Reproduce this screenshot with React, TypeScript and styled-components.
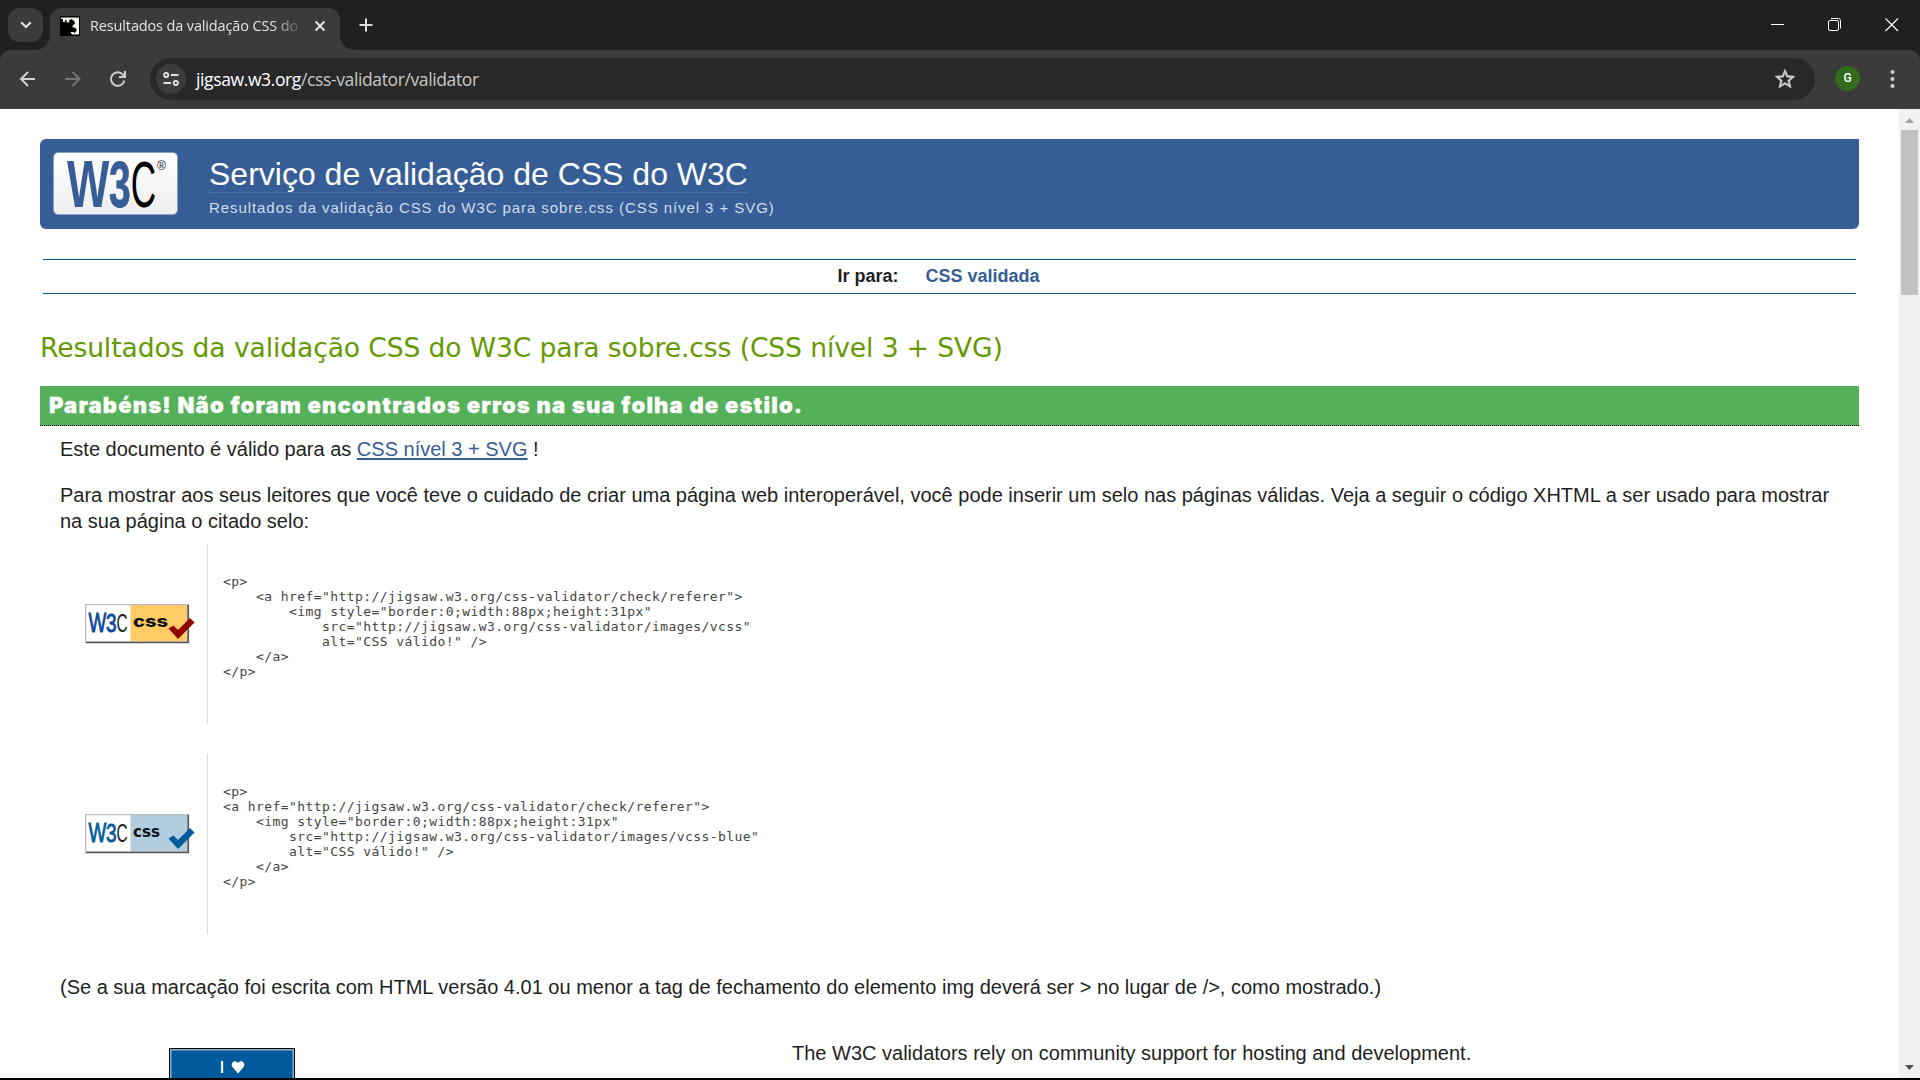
import React from "react";
import styled, { createGlobalStyle } from "styled-components";

const Global = createGlobalStyle`
  * { box-sizing: border-box; }
  body { margin: 0; background: #fff; overflow: hidden; }
`;

const arial = `"Liberation Sans", Arial, sans-serif`;
const segoe = `"Open Sans", "Noto Sans", sans-serif`;

const Window = styled.div`
  width: 1920px; height: 1080px; display: flex; flex-direction: column;
  border-bottom: 2px solid #000; background: #3b3b3b; overflow: hidden;
`;
const TabStrip = styled.div`
  height: 50px; flex: none; background: #1f2121; display: flex; padding-left: 8px; align-items: flex-start;
`;
const TabSearch = styled.div`
  width: 35px; height: 34px; margin-top: 8px; border-radius: 12px; background: #3b3b3b;
  display: flex; align-items: center; justify-content: center;
`;
const Tab = styled.div`
  width: 290px; height: 42px; margin: 8px 0 0 7px; border-radius: 12px 12px 0 0; background: #3b3b3b;
  display: flex; align-items: center; padding: 0 12px 7px 10px; position: relative;
  &::before, &::after {
    content: ""; position: absolute; bottom: 0; width: 14px; height: 14px;
  }
  &::before { left: -14px; background: radial-gradient(circle at 0 0, transparent 13.5px, #3b3b3b 14px); }
  &::after { right: -14px; background: radial-gradient(circle at 100% 0, transparent 13.5px, #3b3b3b 14px); }
`;
const TabTitle = styled.div`
  width: 212px; margin-left: 10px; overflow: hidden; white-space: nowrap;
  font: 14.5px/20px ${segoe}; letter-spacing: -0.14px; color: #e3e3e3;
  mask-image: linear-gradient(to right, #000 182px, transparent 214px);
`;
const TabClose = styled.svg`margin-left: 12px; flex: none;`;
const NewTab = styled.svg`margin: 18px 0 0 19px;`;
const WindowControls = styled.div`
  margin: 18px 21px 0 auto; display: flex; gap: 43px;
`;

const ToolbarBack = styled.div`background: #1f2121; flex: none;`;
const Toolbar = styled.div`
  height: 59px; background: #3b3b3b; border-bottom: 1px solid #4a4646; border-radius: 10px 10px 0 0;
  display: flex; align-items: center; padding: 0 20px 1px 18px;
`;
const NavIcon = styled.svg`margin-right: 25px; flex: none;`;
const AddressBar = styled.div`
  width: 1665px; height: 42px; margin-left: -3px; border-radius: 21px; background: #282828;
  display: flex; align-items: center; padding: 0 18px 0 6px;
`;
const SiteChip = styled.div`
  width: 30px; height: 30px; border-radius: 50%; background: #3c3c3c;
  display: flex; align-items: center; justify-content: center;
`;
const Url = styled.div`
  margin-left: 10px; font: 17.5px/24px ${segoe}; letter-spacing: -0.38px; color: #c7c7c7; flex: 1;
  b { font-weight: 400; color: #fff; }
`;
const Avatar = styled.div`
  width: 25px; height: 25px; margin-left: 20px; border-radius: 50%; background: #316b1c; color: #fff;
  font: 500 12px/25px Roboto, sans-serif; text-align: center;
`;
const Menu = styled.svg`margin-left: auto;`;

const Viewport = styled.div`flex: 1; min-height: 0; display: flex; background: #fff;`;
const Page = styled.main`
  width: 1899px; padding: 30px 40px 0; overflow: hidden; font-family: ${arial}; color: #1f1f1f;
`;
const ScrollTrack = styled.div`
  width: 21px; background: #f1f1f1; display: flex; flex-direction: column; align-items: center; justify-content: space-between;
`;
const ScrollThumb = styled.div`width: 17px; height: 165px; background: #c1c1c1; margin-bottom: auto;`;
const ScrollArrow = styled.svg`flex: none; display: block;`;

const Banner = styled.header`
  height: 90px; background: #365d95; border-radius: 6px 0 6px 6px; display: flex; padding: 13px 0 0 13px;
`;
const LogoPlate = styled.div`
  width: 125px; height: 63px; border-radius: 5px; border: 1px solid #85a0c4;
  background: linear-gradient(#fff, #eee); display: flex;
  svg { overflow: visible; }
`;
const BannerText = styled.div`
  margin: 1px 0 0 31px; display: flex; flex-direction: column; align-items: flex-start;
`;
const Title = styled.h1`
  margin: 0; padding-top: 4px; font: 400 32px/35px ${arial}; color: #fff; border-bottom: 1px solid #51719f; white-space: nowrap;
`;
const Tagline = styled.p`
  margin: 5px 0 0; font: 15px/20px ${arial}; letter-spacing: 0.93px; color: #cfdcec; white-space: nowrap;
`;
const JumpBar = styled.nav`
  margin: 30px 3px 0; height: 35px; border: solid #005a9c; border-width: 1px 0;
  display: flex; justify-content: center; gap: 27px; padding-right: 22px;
  font: bold 18px/33px ${arial};
  a { color: #365d95; }
`;
const Results = styled.h2`
  margin: 37px 0 0; height: 55px; font: 400 26.6px/34px "DejaVu Sans", Verdana, sans-serif;
  letter-spacing: -0.12px; color: #690; white-space: nowrap;
`;
const Success = styled.h3`
  margin: 0; height: 40px; padding: 0 9px; background: #55b05a; border-bottom: 1px dotted #000; color: #fff;
  font: 900 22px/38px Inter, "Liberation Sans", sans-serif; letter-spacing: 1.18px; white-space: nowrap;
  -webkit-text-stroke: 0.3px #fff;
`;
const Paragraph = styled.p<{ $top: number }>`
  margin: ${(p) => p.$top}px 20px 0; font: 20px/26px ${arial};
  a { color: #365d95; text-decoration: underline; text-decoration-thickness: 2px; text-underline-offset: 2px; }
`;
const BadgeRow = styled.div<{ $top: number }>`
  margin-top: ${(p) => p.$top}px; height: 180px; display: flex; align-items: center;
`;
const BadgeCell = styled.div`
  width: 168px; height: 180px; padding: 60px 0 0 45px; border-right: 1px solid #ddd;
`;
const Code = styled.pre`
  margin: 0; padding: 0 0 15px 15px; font: 13px/15px "DejaVu Sans Mono", monospace; letter-spacing: 0.424px; color: #444;
`;
const Support = styled.div`margin-top: 40px; display: flex; align-items: flex-start;`;
const Donate = styled.div`
  width: 126px; height: 60px; margin: 8px 0 0 129px; border: 1px solid #000; background: #005a9c;
  box-shadow: inset 0 0 0 1.5px #8fb0cc; display: flex; justify-content: center; gap: 7px; padding: 8px 0 0 1px;
  color: #fff; font: 600 16px/20px "Open Sans", sans-serif;
`;
const SupportText = styled.p`margin: 0 0 0 497px; font: 20px/26px ${arial};`;

function MainLogo() {
  return (
    <svg width="123" height="61" viewBox="0 0 123 61">
      <g fontFamily="Liberation Sans">
        <text transform="translate(13 54) scale(.68 1)" fontSize="66" fontWeight="bold" fill="#365d95">W</text>
        <text transform="translate(55 53.500) scale(.61 1)" fontSize="64" fontWeight="bold" fill="#365d95" stroke="#365d95" strokeWidth=".8">3</text>
        <text transform="translate(76.800 53.500) scale(.55 1)" fontSize="64" fill="#000">C</text>
        <text x="103" y="17" fontSize="12" fill="#111">®</text>
      </g>
    </svg>
  );
}

const BadgeImage = styled.svg`overflow: visible; display: block;`;

function CssBadge({ fill, check, w3, wide }: { fill: string; check: string; w3: string; wide?: boolean }) {
  return (
    <BadgeImage width="110" height="39" viewBox="0 0 110 39">
      <rect x="0" y="0" width="104" height="39" fill="#bbb" />
      <path d="M1 38.5H104M103.3 1V39" stroke="#555" strokeWidth="1.6" />
      <rect x="1.2" y="1.2" width="44.5" height="36" fill="#fff" />
      <rect x="45.7" y="1.2" width="56" height="36" fill={fill} />
      <g fontFamily="Liberation Sans">
        <text transform="translate(3.5 28) scale(.7 1)" fontSize="27" fill={w3} stroke={w3} strokeWidth=".9">W</text>
        <text transform="translate(21 28) scale(.72 1)" fontSize="26.5" fill={w3} stroke={w3} strokeWidth=".9">3</text>
        <text transform="translate(31.500 28) scale(.58 1)" fontSize="26.5" fill="#222">C</text>
      </g>
      <text x="48" y="23.3" fontFamily={wide ? "Inter" : "DejaVu Sans"} fontWeight={wide ? 800 : 700} fontSize={wide ? 16 : 15.5}
        textLength={wide ? 35 : 27} lengthAdjust="spacingAndGlyphs" fill="#111">css</text>
      <path d="M83.5 24.5L88.5 21.5L93 26L105 14L109.5 18.5L93 35Z" fill={check} />
    </BadgeImage>
  );
}

const codeGold = `<p>
    <a href="http://jigsaw.w3.org/css-validator/check/referer">
        <img style="border:0;width:88px;height:31px"
            src="http://jigsaw.w3.org/css-validator/images/vcss"
            alt="CSS válido!" />
    </a>
</p>`;
const codeBlue = `<p>
<a href="http://jigsaw.w3.org/css-validator/check/referer">
    <img style="border:0;width:88px;height:31px"
        src="http://jigsaw.w3.org/css-validator/images/vcss-blue"
        alt="CSS válido!" />
    </a>
</p>`;

export default function App() {
  return (
    <Window>
      <Global />
      <TabStrip>
        <TabSearch>
          <svg width="12" height="8" viewBox="0 0 12 8"><path d="M1.2 1.2L6 6L10.8 1.2" fill="none" stroke="#e3e3e3" strokeWidth="2" /></svg>
        </TabSearch>
        <Tab>
          <svg width="20" height="20" viewBox="0 0 20 20">
            <rect width="20" height="20" fill="#000" />
            <path d="M1 1.500H19V18.500H12L10.500 16H13.500L14.500 17L16.500 15V13L14.500 11.500H12.500V10L15 7.500L14 5L11.500 3L9.500 4L9 6.500H6.500V4H5V6H3V3H1Z" fill="#f4f4ea" />
          </svg>
          <TabTitle>Resultados da validação CSS do</TabTitle>
          <TabClose width="12" height="12" viewBox="0 0 12 12"><path d="M1.5 1.5L10.5 10.5M10.5 1.5L1.5 10.5" stroke="#e3e3e3" strokeWidth="1.9" /></TabClose>
        </Tab>
        <NewTab width="14" height="14" viewBox="0 0 14 14"><path d="M7 .5V13.5M.5 7H13.5" stroke="#dedede" strokeWidth="2" /></NewTab>
        <WindowControls>
          <svg width="14" height="14"><path d="M0 6.5H13" stroke="#fff" /></svg>
          <svg width="14" height="14" fill="none" stroke="#fff"><rect x=".5" y="2.5" width="10" height="10" rx="1.5" /><path d="M3 .5H10.5Q12.5 .5 12.5 2.5V10.5" /></svg>
          <svg width="14" height="14"><path d="M.5 .5L13 13M13 .5L.5 13" stroke="#fff" strokeWidth="1.1" /></svg>
        </WindowControls>
      </TabStrip>
      <ToolbarBack>
        <Toolbar>
          <NavIcon width="20" height="20" viewBox="0 0 20 20" fill="none" stroke="#d0d0d0" strokeWidth="2"><path d="M17 10H3M10 3L3 10L10 17" /></NavIcon>
          <NavIcon width="20" height="20" viewBox="0 0 20 20" fill="none" stroke="#757575" strokeWidth="2"><path d="M2 10H16M9.5 3L16.5 10L9.5 17" /></NavIcon>
          <NavIcon width="20" height="20" viewBox="0 0 20 20" fill="none" stroke="#d0d0d0" strokeWidth="2"><path d="M16.4 11.5A6.8 6.8 0 1 1 15.3 6L17 8M17 2V8H11" /></NavIcon>
          <AddressBar>
            <SiteChip>
              <svg width="16" height="14" viewBox="0 0 16 14" fill="none" stroke="#e3e3e3" strokeWidth="1.9"><circle cx="3.2" cy="3" r="2.1" /><path d="M8 3H15.5M.5 11H8" /><circle cx="12.8" cy="11" r="2.1" /></svg>
            </SiteChip>
            <Url><b>jigsaw.w3.org</b>/css-validator/validator</Url>
            <svg width="24" height="24" viewBox="0 0 24 24" fill="#d0d0d0"><path d="M22 9.24l-7.19-.62L12 2 9.19 8.63 2 9.24l5.46 4.73L5.82 21 12 17.27 18.18 21l-1.63-7.03L22 9.24zM12 15.4l-3.76 2.27 1-4.28-3.32-2.88 4.38-.38L12 6.1l1.71 4.04 4.38.38-3.32 2.88 1 4.28L12 15.4z" stroke="#d0d0d0" strokeWidth=".5" /></svg>
          </AddressBar>
          <Avatar>G</Avatar>
          <Menu width="16" height="20" fill="#d0d0d0"><circle cx="8.500" cy="3" r="2" /><circle cx="8.500" cy="10" r="2" /><circle cx="8.500" cy="17" r="2" /></Menu>
        </Toolbar>
      </ToolbarBack>
      <Viewport>
        <Page>
          <Banner>
            <LogoPlate><MainLogo /></LogoPlate>
            <BannerText>
              <Title>Serviço de validação de CSS do W3C</Title>
              <Tagline>Resultados da validação CSS do W3C para sobre.css (CSS nível 3 + SVG)</Tagline>
            </BannerText>
          </Banner>
          <JumpBar><span>Ir para:</span><a>CSS validada</a></JumpBar>
          <Results>Resultados da validação CSS do W3C para sobre.css (CSS nível 3 + SVG)</Results>
          <Success>Parabéns! Não foram encontrados erros na sua folha de estilo.</Success>
          <Paragraph $top={10}>Este documento é válido para as <a>CSS nível 3 + SVG</a> !</Paragraph>
          <Paragraph $top={20}>
            Para mostrar aos seus leitores que você teve o cuidado de criar uma página web interoperável, você pode inserir um selo nas páginas válidas. Veja a seguir o código XHTML a ser usado para mostrar na sua página o citado selo:
          </Paragraph>
          <BadgeRow $top={10}>
            <BadgeCell><CssBadge fill="#ffcc66" check="#900000" w3="#0c479d" wide /></BadgeCell>
            <Code>{codeGold}</Code>
          </BadgeRow>
          <BadgeRow $top={30}>
            <BadgeCell><CssBadge fill="#b2cce0" check="#005a9c" w3="#005a9c" /></BadgeCell>
            <Code>{codeBlue}</Code>
          </BadgeRow>
          <Paragraph $top={40}>(Se a sua marcação foi escrita com HTML versão 4.01 ou menor a tag de fechamento do elemento img deverá ser &gt; no lugar de /&gt;, como mostrado.)</Paragraph>
          <Support>
            <Donate><span>I</span>
              <svg width="14" height="20" viewBox="0 0 14 20"><path d="M7 16.500L1 9.500C-.5 5 4 2 7 6C10 2 14.500 5 13 9.500Z" fill="#fff" /></svg>
            </Donate>
            <SupportText>The W3C validators rely on community support for hosting and development.</SupportText>
          </Support>
        </Page>
        <ScrollTrack>
          <ScrollArrow width="21" height="21"><path d="M6 14L10.500 9L15 14Z" fill="#a3a3a3" /></ScrollArrow>
          <ScrollThumb />
          <ScrollArrow width="21" height="17"><path d="M6 4L15 4L10.500 9Z" fill="#505050" /></ScrollArrow>
        </ScrollTrack>
      </Viewport>
    </Window>
  );
}
